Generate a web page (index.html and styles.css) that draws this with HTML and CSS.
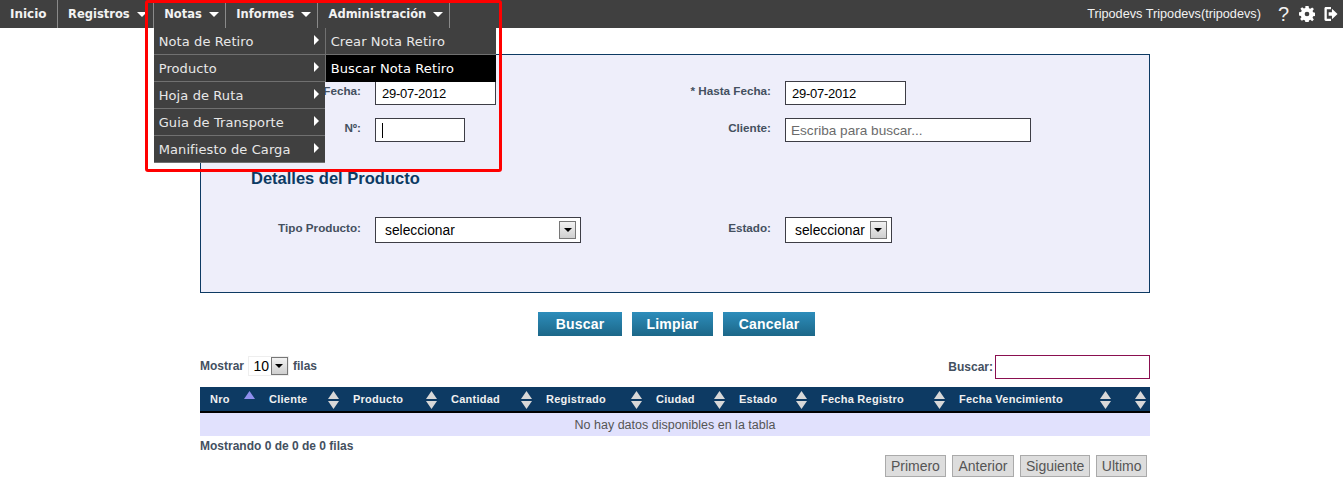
FILE: index.html
```html
<!DOCTYPE html>
<html lang="es">
<head>
<meta charset="utf-8">
<title>Buscar Nota Retiro</title>
<link rel="stylesheet" href="styles.css">
</head>
<body>
<header class="topbar">
  <ul class="menu">
    <li class="menu-item"><a class="menu-link">Inicio</a></li>
    <li class="menu-item"><a class="menu-link">Registros<i class="caret"></i></a></li>
    <li class="menu-item menu-notas"><a class="menu-link">Notas<i class="caret"></i></a>
      <ul class="drop">
        <li class="drop-item">Nota de Retiro<i class="side"></i>
          <ul class="drop sub">
            <li class="drop-item">Crear Nota Retiro</li>
            <li class="drop-item active">Buscar Nota Retiro</li>
          </ul>
        </li>
        <li class="drop-item">Producto<i class="side"></i></li>
        <li class="drop-item">Hoja de Ruta<i class="side"></i></li>
        <li class="drop-item">Guia de Transporte<i class="side"></i></li>
        <li class="drop-item">Manifiesto de Carga<i class="side"></i></li>
      </ul>
    </li>
    <li class="menu-item"><a class="menu-link">Informes<i class="caret"></i></a></li>
    <li class="menu-item"><a class="menu-link">Administración<i class="caret"></i></a></li>
  </ul>
  <div class="user">
    <span class="user-name">Tripodevs Tripodevs(tripodevs)</span>
    <span class="help">?</span>
    <svg class="gear" width="16" height="16" viewBox="0 0 17 17"><path fill="#fff" fill-rule="evenodd" d="M6.800 0h3.400l.4 2.300 1.500.6L14 1.500l1.800 1.800-1.400 1.900.6 1.500 2.300.4v3.400l-2.300.4-.6 1.500 1.400 1.900-1.800 1.800-1.900-1.400-1.500.6-.4 2.300H6.800l-.4-2.300-1.500-.6L3 15.700 1.200 13.900l1.400-1.900-.6-1.500L0 10.100V6.700l2.300-.4.6-1.500L1.500 3 3.300 1.200l1.900 1.400 1.500-.6zM8.500 6a2.500 2.500 0 1 0 0 5 2.500 2.500 0 0 0 0-5z"/></svg>
    <svg class="exit" width="14" height="14" viewBox="0 0 14 15"><path fill="#fff" d="M0 1.500C0 .7.700 0 1.500 0H7v2.500H2.500v10H7V15H1.500C.7 15 0 14.300 0 13.500z"/><path fill="#fff" d="M4.500 5.500H8V2l6 5.500-6 5.500V9.500H4.500z"/></svg>
  </div>
</header>

<div class="annotation"></div>

<main class="page">
  <section class="panel">
    <div class="form-grid">
      <label class="field-label">* Desde Fecha:</label>
      <div><input class="text date" value="29-07-2012"></div>
      <label class="field-label">* Hasta Fecha:</label>
      <div><input class="text date" value="29-07-2012"></div>
      <label class="field-label">Nº:</label>
      <div><input class="text num"></div>
      <label class="field-label">Cliente:</label>
      <div><input class="text client" placeholder="Escriba para buscar..."></div>
    </div>
    <h2 class="section-title">Detalles del Producto</h2>
    <div class="form-grid">
      <label class="field-label">Tipo Producto:</label>
      <div><div class="select wide"><span class="select-value">seleccionar</span><span class="select-btn"></span></div></div>
      <label class="field-label">Estado:</label>
      <div><div class="select"><span class="select-value">seleccionar</span><span class="select-btn"></span></div></div>
    </div>
  </section>

  <div class="actions">
    <button class="btn">Buscar</button>
    <button class="btn">Limpiar</button>
    <button class="btn">Cancelar</button>
  </div>

  <div class="table-tools">
    <div class="length">Mostrar <span class="length-select"><span>10</span><span class="select-btn"></span></span> filas</div>
    <div class="search">Buscar:<input class="search-input"></div>
  </div>

  <table class="grid">
    <thead>
      <tr>
        <th class="c1">Nro<svg class="sort" width="11" height="18" viewBox="0 0 11 18"><path fill="#8f8fee" d="M5.500 0l5.500 8H0z"/></svg></th>
        <th class="c2">Cliente<svg class="sort" width="11" height="18" viewBox="0 0 11 18"><path fill="#d8d8d8" d="M5.500 0l5.500 8H0zM0 10h11l-5.500 8z"/></svg></th>
        <th class="c3">Producto<svg class="sort" width="11" height="18" viewBox="0 0 11 18"><path fill="#d8d8d8" d="M5.500 0l5.500 8H0zM0 10h11l-5.500 8z"/></svg></th>
        <th class="c4">Cantidad<svg class="sort" width="11" height="18" viewBox="0 0 11 18"><path fill="#d8d8d8" d="M5.500 0l5.500 8H0zM0 10h11l-5.500 8z"/></svg></th>
        <th class="c5">Registrado<svg class="sort" width="11" height="18" viewBox="0 0 11 18"><path fill="#d8d8d8" d="M5.500 0l5.500 8H0zM0 10h11l-5.500 8z"/></svg></th>
        <th class="c6">Ciudad<svg class="sort" width="11" height="18" viewBox="0 0 11 18"><path fill="#d8d8d8" d="M5.500 0l5.500 8H0zM0 10h11l-5.500 8z"/></svg></th>
        <th class="c7">Estado<svg class="sort" width="11" height="18" viewBox="0 0 11 18"><path fill="#d8d8d8" d="M5.500 0l5.500 8H0zM0 10h11l-5.500 8z"/></svg></th>
        <th class="c8">Fecha Registro<svg class="sort" width="11" height="18" viewBox="0 0 11 18"><path fill="#d8d8d8" d="M5.500 0l5.500 8H0zM0 10h11l-5.500 8z"/></svg></th>
        <th class="c9">Fecha Vencimiento<svg class="sort" width="11" height="18" viewBox="0 0 11 18"><path fill="#d8d8d8" d="M5.500 0l5.500 8H0zM0 10h11l-5.500 8z"/></svg></th>
        <th class="c10"><svg class="sort" width="11" height="18" viewBox="0 0 11 18"><path fill="#d8d8d8" d="M5.500 0l5.500 8H0zM0 10h11l-5.500 8z"/></svg></th>
      </tr>
    </thead>
    <tbody>
      <tr><td colspan="10">No hay datos disponibles en la tabla</td></tr>
    </tbody>
  </table>

  <div class="table-info">Mostrando 0 de 0 de 0 filas</div>
  <div class="pager">
    <span class="page-btn">Primero</span>
    <span class="page-btn">Anterior</span>
    <span class="page-btn">Siguiente</span>
    <span class="page-btn">Ultimo</span>
  </div>
</main>
</body>
</html>
```
FILE: styles.css
```css
* { box-sizing: border-box; }
html, body { margin: 0; padding: 0; overflow: hidden; }
body { background: #fff; font-family: "Liberation Sans", Arial, sans-serif; color: #44505f; height: 484px; }
ul { list-style: none; margin: 0; padding: 0; }

.topbar { height: 28px; background: #404040; display: flex; justify-content: space-between; color: #fff; }
.menu { display: flex; }
.menu-item { position: relative; border-right: 1px solid #8a8a8a; height: 28px; }
.menu-link { display: flex; align-items: center; height: 28px; padding: 0 6px 0 10.500px; font: bold 11.500px "DejaVu Sans", Verdana, sans-serif; color: #f2f2f2; white-space: nowrap; }
.menu-item:first-child .menu-link { padding: 0 10px; font-size: 12px; }
.caret { width: 0; height: 0; margin-left: 7px; border-left: 5px solid transparent; border-right: 5px solid transparent; border-top: 5px solid #fff; }

.drop { position: absolute; left: 0; top: 28px; width: 171px; z-index: 5; background: #404040; }
.drop-item { position: relative; height: 27px; padding-left: 5px; padding-top: 1px; font: 13px/26px "DejaVu Sans", Verdana, sans-serif; letter-spacing: .1px; color: #e8e8e8; border-bottom: 1px solid #707070; white-space: nowrap; }
.side { position: absolute; right: 6px; top: 7px; width: 0; height: 0; border-top: 5px solid transparent; border-bottom: 5px solid transparent; border-left: 5px solid #fff; }
.sub { left: 171px; top: 0; border-left: 1px solid #707070; }
.sub .drop-item:last-child { border-bottom: 0; }
.active { background: #000; color: #fff; }

.user { display: flex; align-items: center; padding-right: 5px; }
.user-name { font-size: 12.700px; color: #f2f2f2; margin-right: 17px; }
.help { font-size: 20px; line-height: 28px; margin-right: 10px; color: #f2f2f2; }
.gear { margin-right: 9px; }

.annotation { position: absolute; left: 145px; top: 0; width: 357px; height: 172px; border: 3px solid #f00; border-radius: 3px; z-index: 10; pointer-events: none; }

.page { width: 950px; margin: 26px 0 0 200px; }
.panel { height: 239px; border: 1px solid #0d3a63; background: #eeeefa; padding-top: 26px; }
.form-grid { display: grid; grid-template-columns: 160px 222px 160px 1fr; column-gap: 14px; row-gap: 13px; }
.field-label { font-size: 11.700px; font-weight: bold; text-align: right; color: #44505f; line-height: 18px; padding-top: 1px; }
.section-title + .form-grid .field-label { padding-top: 2px; }
.text { display: block; height: 24px; border: 1px solid #3d3d45; background: #fff; font: 13px "Liberation Sans", Arial, sans-serif; letter-spacing: -.25px; color: #000; padding: 0 6px; outline: none; }
.date { width: 121px; }
.num { width: 90px; background: linear-gradient(#000, #000) no-repeat 6px 4px / 1px 15px #fff; }
.client { width: 246px; font-size: 13.600px; letter-spacing: 0; padding: 0 5px; }
.client::placeholder { color: #6b6b6b; opacity: 1; }
.section-title { margin: 27px 0 30px 50px; font-size: 16.500px; line-height: 18px; font-weight: bold; color: #0d3a63; }

.select { display: inline-flex; align-items: center; justify-content: space-between; height: 26px; border: 1px solid #3d3d45; background: #fff; padding: 0 4px 0 9px; font-size: 13.800px; color: #000; }
.select.wide { width: 206px; }
.select-value { margin-right: 5px; }
.select-btn { position: relative; flex: none; display: inline-block; width: 17px; height: 18px; border: 1px solid #777; background: linear-gradient(#f2f2f2, #cfcfcf); }
.select-btn::after { content: ""; position: absolute; left: 3.500px; top: 6px; border-left: 4px solid transparent; border-right: 4px solid transparent; border-top: 4px solid #000; }

.actions { display: flex; justify-content: flex-start; gap: 10px; margin: 19px 0 0 338px; }
.btn { height: 24px; border: 0; padding: 0; width: 84px; font: bold 14px "Liberation Sans", Arial, sans-serif; letter-spacing: .2px; color: #fff; background: linear-gradient(#2d8dbb, #1c6788); }
.btn:nth-child(2) { width: 81px; }
.btn:nth-child(3) { width: 92px; }

.table-tools { display: flex; justify-content: space-between; height: 24px; margin-top: 19px; font-size: 12px; font-weight: bold; }
.length { display: flex; align-items: center; height: 22px; gap: 4px; }
.length-select { display: inline-flex; align-items: center; gap: 1.500px; height: 20px; padding: 0 0 0 4.500px; border: 1px solid #eee; background: #fff; font-size: 14px; font-weight: normal; color: #000; width: 41px; }
.search { display: flex; align-items: center; gap: 2px; }
.search-input { width: 155px; height: 24px; border: 1px solid #8a0f50; background: #fff; outline: none; }

.grid { width: 950px; margin-top: 8px; border-collapse: collapse; table-layout: fixed; }
.grid th { position: relative; height: 25px; padding: 0 0 0 10px; background: #0d3a63; border-bottom: 2px solid #000; font: bold 11px "Liberation Sans", Arial, sans-serif; letter-spacing: .25px; color: #f0f0f0; text-align: left; white-space: nowrap; }
.sort { position: absolute; right: 4px; top: 4px; }
.c1 { width: 59px; } .c2 { width: 84px; } .c3 { width: 98px; } .c4 { width: 95px; } .c5 { width: 110px; }
.c6 { width: 83px; } .c7 { width: 82px; } .c8 { width: 138px; } .c9 { width: 166px; } .c10 { width: 35px; }
.grid td { height: 24px; background: #e1e1fd; font-size: 12.500px; text-align: center; color: #555; padding: 0; }

.table-info { margin-top: 3px; font-size: 12px; font-weight: bold; line-height: 15px; }
.pager { display: flex; justify-content: flex-end; gap: 6px; padding-right: 3px; margin-top: 1px; }
.page-btn { display: block; height: 22px; padding: 0 5px; border: 1px solid #aaa; background: #ddd; font-size: 14px; line-height: 20px; color: #555; }
.page-btn:nth-child(2) { padding: 0 5.500px; }
.page-btn:nth-child(4) { padding: 0 4.500px; }
```
